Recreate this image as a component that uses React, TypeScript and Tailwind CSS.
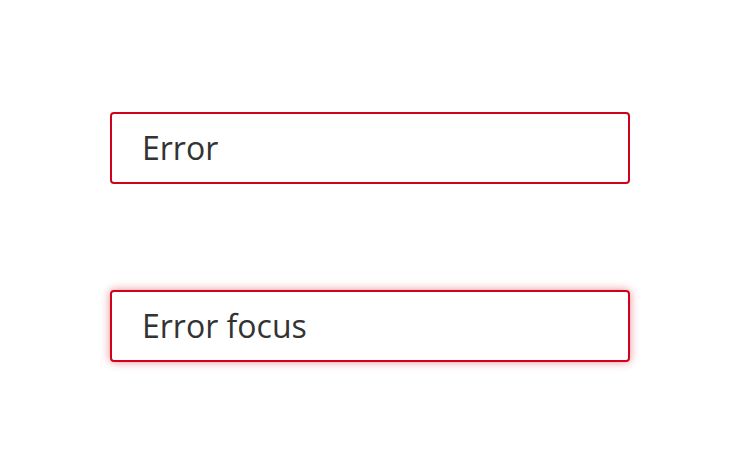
export default function App() {
  return (
    <main className="flex min-h-screen w-full flex-col items-center justify-center gap-[106px] bg-white font-['Open_Sans',sans-serif]">
      {/* plain error state */}
      <input
        type="text"
        defaultValue="Error"
        className="h-[72px] w-[520px] rounded-[4px] border-2 border-[#d0021b] bg-white px-[30px] pb-[2px] text-[32px] text-[#333333] outline-none"
      />

      {/* error + focus ring */}
      <input
        type="text"
        defaultValue="Error focus"
        className="h-[72px] w-[520px] rounded-[4px] border-2 border-[#d0021b] bg-white px-[30px] pb-[2px] text-[32px] text-[#333333] shadow-[0_0_10px_rgba(208,2,27,0.45)] outline-none"
      />
    </main>
  )
}
